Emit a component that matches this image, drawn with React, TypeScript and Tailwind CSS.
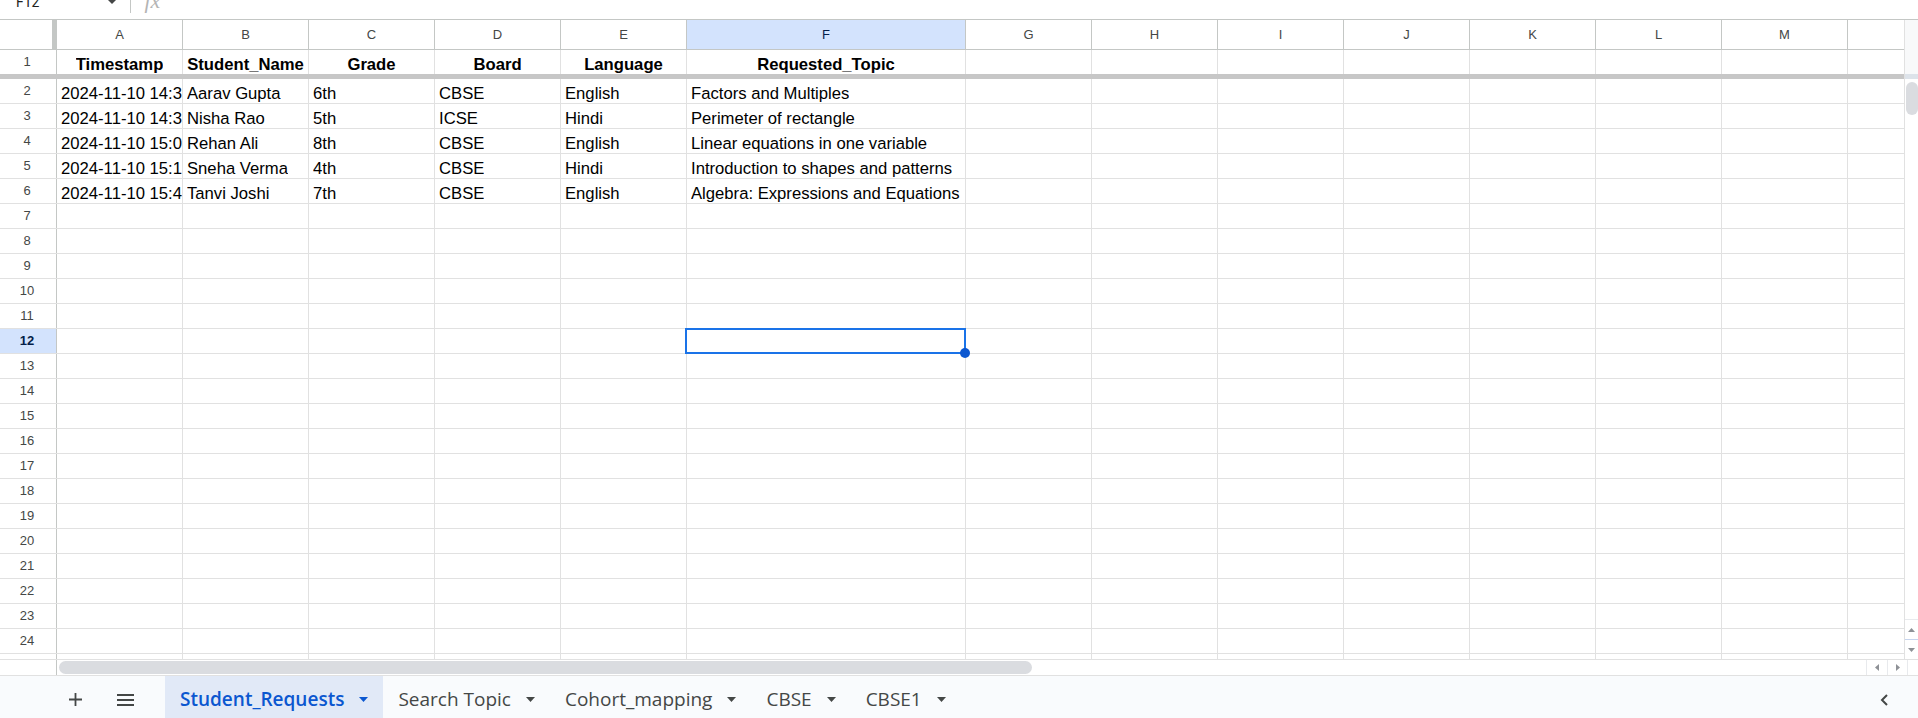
import type { ReactNode } from "react"

type Col = { id: string; w: string; last?: boolean }

const COLS: Col[] = [
  { id: "A", w: "w-[126px]" },
  { id: "B", w: "w-[126px]" },
  { id: "C", w: "w-[126px]" },
  { id: "D", w: "w-[126px]" },
  { id: "E", w: "w-[126px]" },
  { id: "F", w: "w-[279px]" },
  { id: "G", w: "w-[126px]" },
  { id: "H", w: "w-[126px]" },
  { id: "I", w: "w-[126px]" },
  { id: "J", w: "w-[126px]" },
  { id: "K", w: "w-[126px]" },
  { id: "L", w: "w-[126px]" },
  { id: "M", w: "w-[126px]" },
  { id: "", w: "w-[56px]", last: true },
]

const HEADERS = ["Timestamp", "Student_Name", "Grade", "Board", "Language", "Requested_Topic"]

const ROWS = [
  ["2024-11-10 14:32:10", "Aarav Gupta", "6th", "CBSE", "English", "Factors and Multiples"],
  ["2024-11-10 14:35:42", "Nisha Rao", "5th", "ICSE", "Hindi", "Perimeter of rectangle"],
  ["2024-11-10 15:05:18", "Rehan Ali", "8th", "CBSE", "English", "Linear equations in one variable"],
  ["2024-11-10 15:12:03", "Sneha Verma", "4th", "CBSE", "Hindi", "Introduction to shapes and patterns"],
  ["2024-11-10 15:47:29", "Tanvi Joshi", "7th", "CBSE", "English", "Algebra: Expressions and Equations"],
]

const SELECTED_ROW = 12
const SELECTED_COL = "F"

const TABS = ["Student_Requests", "Search Topic", "Cohort_mapping", "CBSE", "CBSE1"]

function RowHeader({ n, active }: { n: number; active?: boolean }) {
  return (
    <div
      className={`w-[57px] shrink-0 pr-[2px] border-r border-[#c4c7c5] flex items-center justify-center text-[13px] ${
        active ? "bg-[#d3e3fd] font-bold text-[#041e49]" : "text-[#444746]"
      }`}
    >
      {n}
    </div>
  )
}

function Cell({
  col,
  children,
  bold,
  selected,
}: {
  col: Col
  children?: ReactNode
  bold?: boolean
  selected?: boolean
}) {
  return (
    <div
      className={`${col.w} shrink-0 relative flex items-end whitespace-nowrap ${
        col.last ? "" : "border-r border-[#e1e1e1]"
      } ${selected ? "" : "overflow-hidden"} ${bold ? "justify-center font-bold" : "pl-[4px]"}`}
    >
      {children != null && (
        <span className="min-w-0 overflow-hidden text-[16.67px] leading-[19px] text-black">{children}</span>
      )}
      {selected && (
        <>
          <div className="absolute -left-[2px] -top-[1px] -right-[1px] -bottom-[1px] border-2 border-[#1a73e8] z-10" />
          <div className="absolute -right-[5px] -bottom-[5px] w-[10px] h-[10px] rounded-full bg-[#0b57d0] z-10" />
        </>
      )}
    </div>
  )
}

function TabArrow() {
  return (
    <svg width="9" height="5" viewBox="0 0 9 5">
      <path d="M0 0h9L4.5 5z" fill="currentColor" />
    </svg>
  )
}

export default function App() {
  const bodyRows = Array.from({ length: 23 }, (_, i) => i + 2)

  return (
    <div className="w-[1918px] h-[718px] overflow-hidden bg-white flex flex-col font-['Liberation_Sans',Arial,sans-serif]">
      {/* formula bar (cut off at the top) */}
      <div className="h-[20px] shrink-0 border-b border-[#c4c7c5] overflow-hidden flex items-start">
        <span className="ml-[16px] -mt-[5px] text-[14px] leading-[14px] text-[#1f1f1f] font-['Roboto',sans-serif]">
          F12
        </span>
        <svg className="ml-[68px] -mt-[1px]" width="10" height="5" viewBox="0 0 10 5">
          <path d="M0 0h10L5 5z" fill="#444746" />
        </svg>
        <div className="ml-[13px] w-px h-[13px] bg-[#c4c7c5]" />
        <span className="ml-[13px] -mt-[10px] text-[22px] leading-[22px] italic text-[#b4b4b4] font-['Liberation_Serif',serif]">
          fx
        </span>
      </div>

      {/* grid + vertical scrollbar */}
      <div className="flex h-[639px] shrink-0">
        <div className="w-[1904px] shrink-0 flex flex-col">
          {/* column letters */}
          <div className="flex h-[30px] shrink-0 border-b border-[#c4c7c5]">
            <div className="w-[57px] shrink-0 flex justify-end">
              <div className="w-[5px] bg-[#c4c7c5]" />
            </div>
            {COLS.map((c) => (
              <div
                key={c.id || "n"}
                className={`${c.w} shrink-0 flex items-center justify-center text-[13px] ${
                  c.last ? "" : "border-r border-[#c4c7c5]"
                } ${c.id === SELECTED_COL ? "bg-[#d3e3fd] text-[#041e49]" : "text-[#444746]"}`}
              >
                {c.id}
              </div>
            ))}
          </div>

          {/* frozen header row */}
          <div className="flex h-[24px] shrink-0">
            <RowHeader n={1} />
            {COLS.map((c, i) => (
              <Cell key={c.id || "n"} col={c} bold>
                {HEADERS[i]}
              </Cell>
            ))}
          </div>
          <div className="h-[5px] shrink-0 bg-[#c7c7c7]" />

          {bodyRows.map((r) => (
            <div key={r} className="flex h-[25px] shrink-0 border-b border-[#e1e1e1]">
              <RowHeader n={r} active={r === SELECTED_ROW} />
              {COLS.map((c, i) => (
                <Cell key={c.id || "n"} col={c} selected={r === SELECTED_ROW && c.id === SELECTED_COL}>
                  {ROWS[r - 2]?.[i]}
                </Cell>
              ))}
            </div>
          ))}

          {/* partial row 25 */}
          <div className="flex h-[5px] shrink-0">
            <div className="w-[57px] shrink-0 border-r border-[#c4c7c5]" />
            {COLS.map((c) => (
              <div key={c.id || "n"} className={`${c.w} shrink-0 ${c.last ? "" : "border-r border-[#e1e1e1]"}`} />
            ))}
          </div>
        </div>

        {/* vertical scrollbar */}
        <div className="w-[14px] shrink-0 border-l border-[#e1e1e1] flex flex-col">
          <div className="h-[54px] shrink-0 bg-[#f8f9fa]" />
          <div className="h-[5px] shrink-0 bg-[#dde3ea]" />
          <div className="flex-1">
            <div className="mt-[3px] ml-[1px] w-[12px] h-[33px] rounded-full bg-[#dadce0]" />
          </div>
          <div className="h-[20px] shrink-0 border-t border-[#e8eaed] flex items-center justify-center">
            <svg width="7" height="4" viewBox="0 0 7 4">
              <path d="M0 4h7L3.5 0z" fill="#8e9196" />
            </svg>
          </div>
          <div className="h-[20px] shrink-0 border-t border-[#c6d4ee] flex items-center justify-center">
            <svg width="7" height="4" viewBox="0 0 7 4">
              <path d="M0 0h7L3.5 4z" fill="#8e9196" />
            </svg>
          </div>
        </div>
      </div>

      {/* horizontal scrollbar */}
      <div className="h-[16px] shrink-0 border-t border-[#e1e1e1] flex">
        <div className="w-[57px] shrink-0 border-r border-[#c4c7c5]" />
        <div className="ml-[2px] mt-[1px] w-[973px] h-[13px] rounded-full bg-[#dadce0]" />
        <div className="flex-1" />
        <div className="w-[21px] shrink-0 border-l border-[#e8eaed] flex items-center justify-center">
          <svg width="4" height="7" viewBox="0 0 4 7">
            <path d="M4 0v7L0 3.5z" fill="#8e9196" />
          </svg>
        </div>
        <div className="w-[20px] shrink-0 border-l border-[#e8eaed] flex items-center justify-center">
          <svg width="4" height="7" viewBox="0 0 4 7">
            <path d="M0 0v7L4 3.5z" fill="#8e9196" />
          </svg>
        </div>
        <div className="w-[11px] shrink-0 border-l border-[#e8eaed]" />
      </div>

      {/* sheet tabs */}
      <div className="h-[43px] shrink-0 border-t border-[#e1e1e1] bg-[#f9fbfd] flex items-stretch font-['Open_Sans',sans-serif]">
        <div className="ml-[69px] pt-[5px] flex items-center">
          <svg width="13" height="13" viewBox="0 0 13 13">
            <path d="M6.5 0v13M0 6.5h13" stroke="#444746" strokeWidth="1.8" />
          </svg>
        </div>
        <div className="ml-[35px] pt-[5px] flex items-center">
          <svg width="17" height="12" viewBox="0 0 17 12">
            <path d="M0 1h17M0 6h17M0 11h17" stroke="#444746" strokeWidth="1.8" />
          </svg>
        </div>
        <div className="ml-[31px] flex">
          {TABS.map((t, i) => (
            <div
              key={t}
              className={`flex items-center gap-[15px] px-[15px] pt-[5px] ${
                i === 0 ? "bg-[#e1e9f7] text-[#0b57d0]" : "text-[#444746]"
              }`}
            >
              <span className={`text-[19px] ${i === 0 ? "font-semibold" : "font-normal"}`}>{t}</span>
              <TabArrow />
            </div>
          ))}
        </div>
        <div className="ml-auto mr-[30px] pt-[5px] flex items-center">
          <svg width="8" height="12" viewBox="0 0 8 12">
            <path d="M7 1L2 6l5 5" fill="none" stroke="#444746" strokeWidth="2" />
          </svg>
        </div>
      </div>
    </div>
  )
}
